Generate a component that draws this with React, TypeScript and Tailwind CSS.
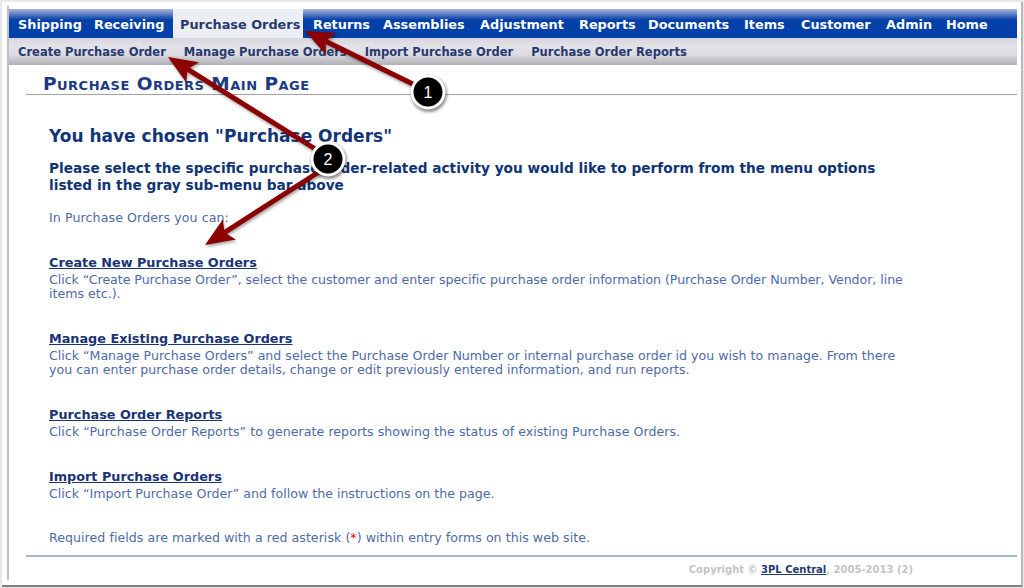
import React from "react";

const mainItems = [
  { label: "Shipping", cls: "w-[76px]" }, { label: "Receiving", cls: "w-[84px]" }, { label: "Purchase Orders", active: true, cls: "w-[130px]" }, { label: "Returns", cls: "w-[70px]" },
  { label: "Assemblies", cls: "w-[97px]" }, { label: "Adjustment", cls: "w-[99px]" }, { label: "Reports", cls: "w-[69px]" }, { label: "Documents", cls: "w-[96px]" },
  { label: "Items", cls: "w-[57px]" }, { label: "Customer", cls: "w-[85px]" }, { label: "Admin", cls: "w-[60px]" }, { label: "Home", cls: "w-[56px]" },
];
const subItems = ["Create Purchase Order", "Manage Purchase Orders", "Import Purchase Order", "Purchase Order Reports"];
const sections = [
  { title: "Create New Purchase Orders", mt: "mt-[27.5px]", body: [
    { t: "Click “Create Purchase Order”, select the customer and enter specific purchase order information (Purchase Order Number, Vendor, line", c: "tracking-[-0.045px]" },
    { t: "items etc.).", c: "" } ] },
  { title: "Manage Existing Purchase Orders", mt: "mt-[28px]", body: [
    { t: "Click “Manage Purchase Orders” and select the Purchase Order Number or internal purchase order id you wish to manage. From there", c: "" },
    { t: "you can enter purchase order details, change or edit previously entered information, and run reports.", c: "" } ] },
  { title: "Purchase Order Reports", mt: "mt-[28px]", body: [
    { t: "Click “Purchase Order Reports” to generate reports showing the status of existing Purchase Orders.", c: "tracking-[0.04px]" } ] },
  { title: "Import Purchase Orders", mt: "mt-[28px]", body: [
    { t: "Click “Import Purchase Order” and follow the instructions on the page.", c: "" } ] },
];

function Badge({ n, cx, cy }: { n: string; cx: number; cy: number }) {
  return (
    <g>
      <circle cx={cx + 1} cy={cy + 2} r={18} fill="#000" opacity={0.45} filter="url(#soft)" />
      <circle cx={cx} cy={cy} r={16} fill="#000" stroke="#fff" strokeWidth={3} />
      <text x={cx} y={cy + 6} textAnchor="middle" fill="#fff" fontSize={16} fontFamily="'Liberation Sans', sans-serif">{n}</text>
    </g>
  );
}

function Arrow({ x1, y1, x2, y2 }: { x1: number; y1: number; x2: number; y2: number }) {
  const a = Math.atan2(y2 - y1, x2 - x1);
  const len = 29, half = 12;
  const ux = Math.cos(a), uy = Math.sin(a);
  const bx = x2 - ux * len, by = y2 - uy * len;
  const nx = -uy * half, ny = ux * half;
  const sx = x2 - ux * (len - 6), sy = y2 - uy * (len - 6);
  const pts = `${x2},${y2} ${bx + nx},${by + ny} ${sx},${sy} ${bx - nx},${by - ny}`;
  return (
    <g>
      <g opacity={0.35} transform="translate(1 2)" filter="url(#soft)">
        <line x1={x1} y1={y1} x2={sx} y2={sy} stroke="#000" strokeWidth={5} />
        <polygon points={pts} fill="#000" />
      </g>
      <line x1={x1} y1={y1} x2={sx} y2={sy} stroke="#8b0000" strokeWidth={5} />
      <polygon points={pts} fill="#8b0000" />
    </g>
  );
}

export default function App() {
  return (
    <div className="relative w-[1024px] h-[588px] overflow-hidden bg-[#e8e8e8] pt-[2px] pl-[2px] pr-[1px] pb-[1px] font-['DejaVu_Sans','Liberation_Sans',sans-serif]">
      <div className="h-full bg-white border-b-2 border-b-[#808080] border-r-2 border-r-[#b8b8b8] pt-[4px] pl-[5px] pr-[4px] pb-[5px]">
        <div className="h-full border-l-2 border-l-[#c0c0c0] pt-[3px] flex flex-col">
          <nav className="h-[29px] flex items-stretch pl-[2px] text-white bg-[linear-gradient(#a8b8dc_0px,#7f98d0_3px,#3f68b8_7px,#0340a8_11px,#0340a8_100%)] text-[12.85px] font-bold">
            {mainItems.map((m) => (
              <span
                key={m.label}
                className={m.active
                  ? `ml-[2px] mr-[3px] pl-[7px] pr-[4px] pt-[8px] leading-[16px] text-[#26396f] bg-[#edeef4] whitespace-nowrap ${m.cls}`
                  : `pl-[7px] pt-[8px] leading-[16px] whitespace-nowrap ${m.cls}`}
              >
                {m.label}
              </span>
            ))}
          </nav>
          <div className="h-[27px] flex items-center pl-[9px] pt-[2px] gap-[18px] text-[11.5px] font-bold text-[#27396f] bg-[linear-gradient(#d6d6dc_0px,#e2e2e8_30%,#dcdce2_60%,#b0b0b6_100%)]">
            {subItems.map((s) => <span key={s} className="whitespace-nowrap">{s}</span>)}
          </div>
          <div className="flex-1 flex flex-col pl-[17px] min-h-0">
            <div className="mt-[7px] h-[23px] border-b border-b-[#a0a4a8] pl-[17px] pt-[2px]">
              <h1 className="[font-variant:small-caps] font-bold text-[18.5px] leading-[20px] tracking-[0.49px] text-[#1c3a82] whitespace-nowrap">Purchase Orders Main Page</h1>
            </div>
            <div className="flex-1 pl-[23px]">
              <h2 className="mt-[31px] text-[17px] leading-[20px] font-bold text-[#12357a]">You have chosen "Purchase Orders"</h2>
              <p className="mt-[14px] text-[13.7px] leading-[17px] font-bold text-[#0f3474]">
                Please select the specific purchase order-related activity you would like to perform from the menu options<br />listed in the gray sub-menu bar above
              </p>
              <p className="mt-[16px] text-[12.6px] leading-[15px] tracking-[0.1px] text-[#4f6aa8]">In Purchase Orders you can:</p>
              {sections.map((s) => (
                <section key={s.title} className={s.mt}>
                  <h3 className="text-[12.8px] leading-[20px] font-bold underline text-[#1a3375]">{s.title}</h3>
                  {s.body.map((b) => <p key={b.t} className={`text-[12.6px] leading-[14px] text-[#4f6aa8] whitespace-nowrap ${b.c}`}>{b.t}</p>)}
                </section>
              ))}
              <p className="mt-[29.5px] text-[12.6px] leading-[15px] tracking-[0.04px] text-[#4f6aa8]">Required fields are marked with a red asterisk (<span className="text-[#e01010]">*</span>) within entry forms on this web site.</p>
            </div>
            <div className="h-[25px] border-t-2 border-t-[#a9b6cf] flex justify-end pr-[104px] pt-[6px] text-[10px] leading-[13px] font-bold text-[#c4c4c4]">
              <span>Copyright © <span className="underline text-[#27396f]">3PL Central</span>, 2005-2013 (2)</span>
            </div>
          </div>
        </div>
      </div>
      <svg className="absolute inset-0 pointer-events-none" width={1024} height={588} viewBox="0 0 1024 588">
        <defs>
          <filter id="soft" x="-30%" y="-30%" width="160%" height="160%"><feGaussianBlur stdDeviation="1.5" /></filter>
        </defs>
        <Arrow x1={425} y1={90} x2={305} y2={31} />
        <Arrow x1={325} y1={155} x2={168} y2={57} />
        <Arrow x1={325} y1={168} x2={205} y2={245} />
        <Badge n="1" cx={428} cy={92} />
        <Badge n="2" cx={328} cy={159} />
      </svg>
    </div>
  );
}
